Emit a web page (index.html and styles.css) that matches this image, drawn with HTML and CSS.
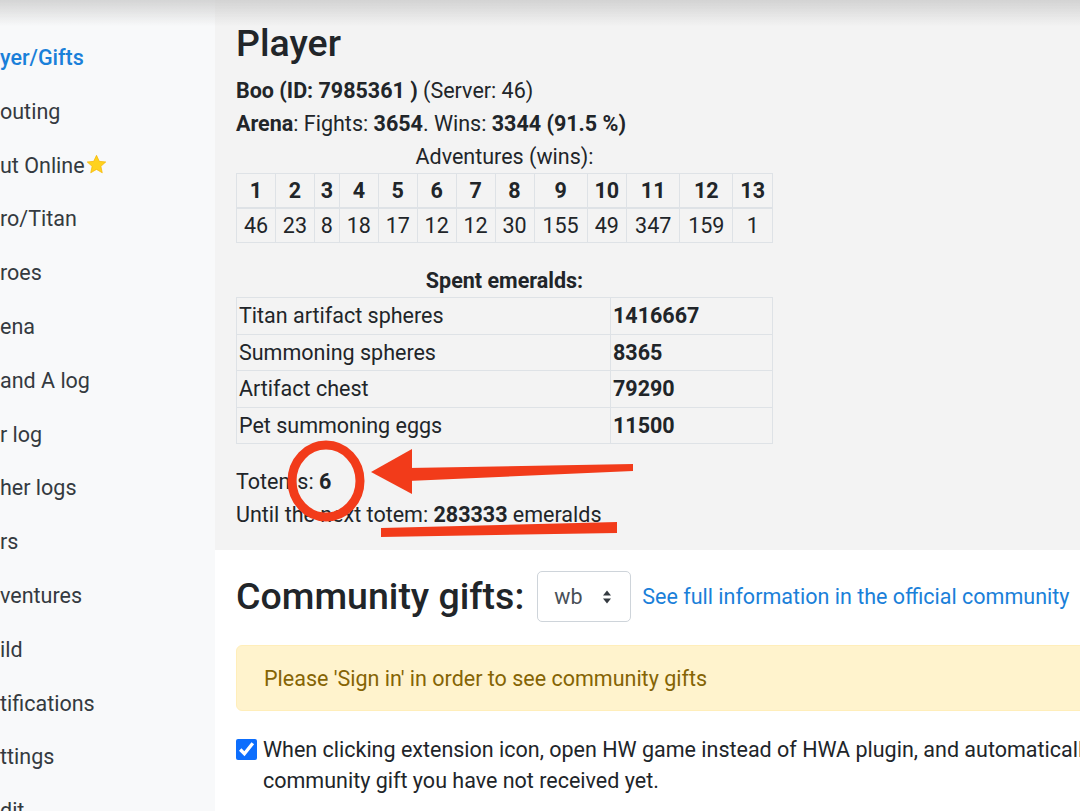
FILE: index.html
```html
<!DOCTYPE html>
<html lang="en">
<head>
    <meta charset="UTF-8">
    <meta name="viewport" content="width=device-width, initial-scale=1.0">
    <title>HWA - Player</title>
    <link rel="stylesheet" href="styles.css">
</head>
<body>
    <div class="page">
        <nav class="sidebar">
            <ul class="menu">
                <li class="active">yer/Gifts</li>
                <li>outing</li>
                <li>ut Online<svg class="star" width="21" height="21" viewBox="0 0 24 24"><polygon points="12,1.5 15.2,8.4 22.6,9.1 17,14.1 18.6,21.5 12,17.6 5.4,21.5 7,14.1 1.4,9.1 8.8,8.4" fill="#ffd21e" stroke="#f5b400" stroke-width="0.8" stroke-linejoin="round"/></svg></li>
                <li>ro/Titan</li>
                <li>roes</li>
                <li>ena</li>
                <li>and A log</li>
                <li>r log</li>
                <li>her logs</li>
                <li>rs</li>
                <li>ventures</li>
                <li>ild</li>
                <li>tifications</li>
                <li>ttings</li>
                <li>dit</li>
            </ul>
        </nav>

        <main class="content">
            <section class="player">
                <h2>Player</h2>
                <div class="player-info">
                    <div><b>Boo (ID: 7985361 )</b> (Server: 46)</div>
                    <div><b>Arena</b>: Fights: <b>3654</b>. Wins: <b>3344 (91.5 %)</b></div>

                    <table class="tbl adv">
                        <caption>Adventures (wins):</caption>
                        <thead>
                            <tr>
                                <th>1</th><th>2</th><th>3</th><th>4</th><th>5</th><th>6</th><th>7</th>
                                <th>8</th><th>9</th><th>10</th><th>11</th><th>12</th><th>13</th>
                            </tr>
                        </thead>
                        <tbody>
                            <tr>
                                <td>46</td><td>23</td><td>8</td><td>18</td><td>17</td><td>12</td><td>12</td>
                                <td>30</td><td>155</td><td>49</td><td>347</td><td>159</td><td>1</td>
                            </tr>
                        </tbody>
                    </table>

                    <table class="tbl spent">
                        <caption>Spent emeralds:</caption>
                        <tbody>
                            <tr><td>Titan artifact spheres</td><td class="num">1416667</td></tr>
                            <tr><td>Summoning spheres</td><td class="num">8365</td></tr>
                            <tr><td>Artifact chest</td><td class="num">79290</td></tr>
                            <tr><td>Pet summoning eggs</td><td class="num">11500</td></tr>
                        </tbody>
                    </table>

                    <div class="totems">Totems: <b>6</b></div>
                    <div>Until the next totem: <b>283333</b> emeralds</div>
                </div>
            </section>

            <section class="gifts">
                <div class="gifts-head">
                    <h2>Community gifts:</h2>
                    <div class="select-box">
                        <span>wb</span>
                        <svg width="10" height="16" viewBox="0 0 10 16"><path d="M5 1.5 L9 6.5 H1 Z M5 14.5 L1 9.5 H9 Z" fill="#343a40"/></svg>
                    </div>
                    <a class="link" href="#">See full information in the official community</a>
                </div>

                <div class="alert">Please 'Sign in' in order to see community gifts</div>

                <label class="check">
                    <input type="checkbox" checked>
                    <span>When clicking extension icon, open HW game instead of HWA plugin, and automatically collect the<br>community gift you have not received yet.</span>
                </label>
            </section>
        </main>
    </div>

    <!-- red marks drawn over the screenshot -->
    <svg class="marks" width="1080" height="811" viewBox="0 0 1080 811">
        <ellipse cx="326" cy="481" rx="34" ry="36" fill="none" stroke="#f23b1a" stroke-width="9"/>
        <polygon points="371,472 412,449 412,494" fill="#f23b1a"/>
        <polygon points="408,468 633,464 633,471 408,481" fill="#f23b1a"/>
        <polygon points="381,528 617,522 617,533 381,537" fill="#f23b1a"/>
    </svg>
    <div class="top-shade"></div>
</body>
</html>
```

FILE: styles.css
```css
html, body {
    margin: 0;
    height: 100%;
    overflow: hidden;
}
body {
    font-family: Roboto, "Liberation Sans", sans-serif;
    font-size: 21.5px;
    line-height: 33px;
    color: #212529;
    background-color: #fff;
}
b {
    font-weight: 700;
}
.page {
    display: flex;
    min-height: 811px;
}

/* left menu, scrolled a bit so the words are cut */
.sidebar {
    flex: none;
    width: 215px;
    background-color: #f8f9fa;
    overflow: hidden;
}
.menu {
    list-style: none;
    margin: 0;
    padding: 31px 0 0;
}
.menu li {
    padding: 10px 0;
    line-height: 33.8px;
    color: #343a40;
    white-space: nowrap;
    display: flex;
    align-items: center;
}
.menu li.active {
    color: #1a80d9;
    font-weight: 500;
}
.star {
    margin-left: 1px;
    margin-top: -2px;
}

.content {
    flex: none;
    width: 1080px;
}
h2 {
    font-size: 37.5px;
    line-height: 45px;
    font-weight: 500;
    margin: 0;
}

/* Player block */
.player {
    background-color: #f3f3f3;
    padding: 21px 21px 19px;
}
.player h2 {
    margin-bottom: 8px;
}
.player-info {
    width: 537px;
}
.tbl {
    width: 100%;
    border-collapse: collapse;
}
.tbl caption {
    caption-side: top;
    text-align: center;
}
.tbl th, .tbl td {
    border: 1px solid #dee2e6;
}
.adv th, .adv td {
    text-align: center;
    padding: 0 4px;
}
.adv th {
    border-bottom-width: 2px;
}
.spent {
    margin-top: 21px;
}
.spent caption {
    font-weight: 700;
}
.spent td {
    padding: 1px 3px 1px 2px;
    line-height: 33.5px;
}
.spent td.num {
    width: 156px;
    font-weight: 700;
}
.totems {
    margin-top: 21px;
}

/* Community gifts */
.gifts {
    padding: 21px 21px 24px;
}
.gifts-head {
    display: flex;
    align-items: center;
}
.select-box {
    display: flex;
    align-items: center;
    justify-content: space-between;
    box-sizing: border-box;
    width: 94px;
    height: 51px;
    margin-left: 13px;
    padding: 0 18px 0 16px;
    border: 1px solid #ced4da;
    border-radius: 5px;
    background-color: #fff;
    color: #495057;
}
.link {
    margin-left: 11px;
    color: #1a80d9;
    text-decoration: none;
}
.alert {
    margin-top: 23px;
    padding: 16px 27px 15px;
    background-color: #fff3cd;
    border: 1px solid #ffeeba;
    border-radius: 6px;
    color: #856404;
}
.check {
    display: flex;
    align-items: flex-start;
    margin-top: 23px;
    line-height: 31px;
    white-space: nowrap;
}
.check input {
    flex: none;
    width: 21px;
    height: 21px;
    margin: 5px 6px 0 0;
    accent-color: #0d6efd;
}

.marks {
    position: absolute;
    top: 0;
    left: 0;
    pointer-events: none;
}
.top-shade {
    position: fixed;
    top: 0;
    left: 0;
    right: 0;
    height: 26px;
    background: linear-gradient(rgba(200, 200, 200, 0.75), rgba(243, 243, 243, 0));
    pointer-events: none;
}
```
